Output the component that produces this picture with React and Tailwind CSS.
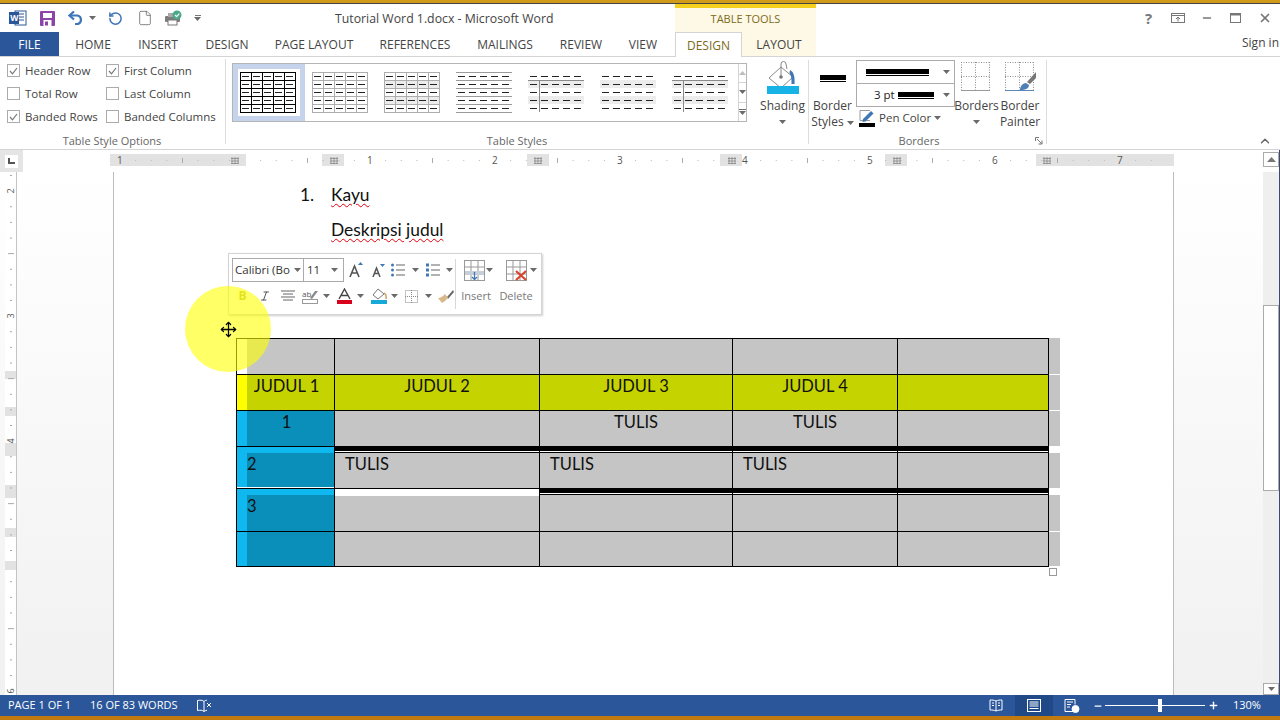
import { File, Minus, Move, Plus, RotateCcw, X, ChevronUp, Italic } from "lucide-react";

const TABS = [
  ["HOME", "w-[68px]"],
  ["INSERT", "w-[62px]"],
  ["DESIGN", "w-[76px]"],
  ["PAGE LAYOUT", "w-[98px]"],
  ["REFERENCES", "w-[104px]"],
  ["MAILINGS", "w-[76px]"],
  ["REVIEW", "w-[76px]"],
  ["VIEW", "w-[48px]"],
];

const Caret = ({ className = "" }) => (
  <svg className={`shrink-0 ${className}`} width="7" height="4" viewBox="0 0 7 4"><path d="M0 0h7L3.5 4z" fill="#6a6a6a" /></svg>
);

const WordLogo = () => (
  <svg width="18" height="16" viewBox="0 0 18 16">
    <rect x="6" y="1" width="11" height="14" fill="#fff" stroke="#2b579a" />
    <path d="M10 4h5M10 7h5M10 10h5" stroke="#2b579a" />
    <rect x="0" y="2" width="10" height="12" fill="#2b579a" />
    <text x="1.2" y="11" fontSize="8.5" fontWeight="700" fill="#fff" fontFamily="Open Sans">W</text>
  </svg>
);

const SaveIcon = () => (
  <svg width="15" height="15" viewBox="0 0 15 15">
    <rect x="0" y="0" width="15" height="15" rx="1" fill="#8c44a8" />
    <rect x="3" y="2" width="9" height="5" fill="#fff" />
    <rect x="3.5" y="9" width="8" height="6" fill="#fff" />
    <rect x="5" y="10.5" width="3" height="4" fill="#8c44a8" />
  </svg>
);

const UndoIcon = () => (
  <svg width="16" height="14" viewBox="0 0 16 14" fill="none" stroke="#3f76b8" strokeWidth="2.2">
    <path d="M1.5 4.5h8a4.4 4.4 0 0 1 0 8.6H7" />
    <path d="M6 0.5 1.5 4.5 6 8.5" />
  </svg>
);

const PrintCheck = () => (
  <svg width="18" height="16" viewBox="0 0 18 16">
    <rect x="0" y="6" width="15" height="6" rx="1" fill="#7d7d7d" />
    <rect x="3" y="10" width="9" height="5" fill="#fff" stroke="#777" />
    <rect x="3" y="3" width="6" height="4" fill="#a9a9a9" />
    <circle cx="12" cy="5" r="4.5" fill="#4aa88c" />
    <path d="M10 5l1.6 1.6L14.4 3.6" stroke="#fff" strokeWidth="1.2" fill="none" />
  </svg>
);

const CheckBox = ({ checked, label }) => (
  <div className="flex h-[23px] items-center gap-[5px]">
    <span className="flex h-[13px] w-[13px] items-center justify-center border border-[#ababab] bg-white">
      {checked && (
        <svg width="9" height="8" viewBox="0 0 9 8" fill="none"><path d="M1 4l2.5 2.8L8 1" stroke="#777" strokeWidth="1.2" /></svg>
      )}
    </span>
    <span>{label}</span>
  </div>
);

const StyleThumb = ({ kind }) => {
  const rowsY = [0, 8, 16, 24, 32, 40];
  const colsX = [0, 11, 22, 33, 44, 55];
  const gridColor = kind === 0 ? "#000" : "#adadad";
  const bands = [2, 4, 5, 6].includes(kind);
  return (
    <svg width="56" height="41" viewBox="0 0 56 41" shapeRendering="crispEdges">
      {bands && [8, 24].map((y) => <rect key={y} x="0" y={y} width="56" height="8" fill="#ececec" />)}
      {[0, 1, 2].includes(kind) && rowsY.map((y) => <line key={y} x1="0" x2="56" y1={y + 0.5} y2={y + 0.5} stroke={gridColor} />)}
      {[0, 1, 2].includes(kind) && colsX.map((x) => <line key={x} x1={x + 0.5} x2={x + 0.5} y1="0" y2="41" stroke={gridColor} />)}
      {kind === 3 && rowsY.map((y) => <line key={y} x1="0" x2="56" y1={y + 0.5} y2={y + 0.5} stroke="#9a9a9a" />)}
      {(kind === 4 || kind === 6) && (
        <>
          <line x1="0" x2="56" y1="8.5" y2="8.5" stroke="#8a8a8a" />
          <line x1="11.5" x2="11.5" y1="8" y2="40" stroke="#8a8a8a" />
        </>
      )}
      {rowsY.slice(0, 5).map((y) =>
        colsX.slice(0, 5).map((x) => <rect key={`${x}-${y}`} x={x + 2} y={y + 4} width="7" height="1" fill="#222" />),
      )}
    </svg>
  );
};

const ShadingIcon = () => (
  <svg width="34" height="34" viewBox="0 0 34 34">
    <path d="M15 6 3 17l12 10 12-11z" fill="#fff" stroke="#8a8a8a" />
    <path d="M15 16V3a2.5 2.5 0 0 1 5 0l1 5" fill="none" stroke="#888" />
    <circle cx="15" cy="16" r="1.8" fill="#777" />
    <path d="M24 9c4 2 5 7 4.500 14h-3c0-5 0-8-2-11z" fill="#3f78b5" />
    <rect x="1" y="25" width="32" height="8" fill="#17b3e6" />
  </svg>
);

const BordersIcon = ({ brush }) => (
  <svg width="33" height="31" viewBox="0 0 33 31" fill="none">
    <g stroke="#8d8d8d" strokeDasharray="1 1.5">
      <path d="M1.5 1v28M15.500 1v28M29.500 1v28M1 1.500h29M1 15.500h29" />
    </g>
    <path d="M1 29.500h29" stroke={brush ? "#5b86b8" : "#9a9a9a"} />
    {brush && (
      <>
        <path d="M16 29c0-4 3-7 6-7l3 2c0 3-3 5-9 5z" fill="#4f7fb5" />
        <path d="m23 21 9-10v6l-6 6z" fill="#777" />
      </>
    )}
  </svg>
);

const PenIcon = () => (
  <svg width="17" height="18" viewBox="0 0 17 18" fill="none">
    <path d="M11 1.500H1v10h10" stroke="#999" />
    <path d="m4 10 8-8 2.500 2.500-8 8L3.500 13z" fill="#3f78b5" />
    <rect x="0" y="14" width="16" height="4" fill="#000" />
  </svg>
);

const ThickLine = ({ className }) => (
  <div className={className}>
    <div className="h-[5px] bg-black" />
    <div className="mt-px h-px bg-black" />
  </div>
);

const RulerTicks = () => {
  const ticks = [];
  for (let i = 1; i < 67; i++) {
    if (i % 8 === 0) continue;
    const x = 10 + i * 15.625;
    ticks.push(
      i % 4 === 0 ? (
        <line key={i} x1={x} x2={x} y1="4" y2="9" stroke="#aaa" />
      ) : (
        <line key={i} x1={x} x2={x} y1="6" y2="7" stroke="#bbb" />
      ),
    );
  }
  return (
    <svg className="absolute left-0 top-0" width="1064" height="12" viewBox="0 0 1064 12">
      {ticks}
      {[125, 224, 428, 622, 787, 937].map((x) => (
        <path key={x} d={`M${x - 3} 3v7M${x} 3v7M${x + 3} 3v7M${x - 4} 4.500h8M${x - 4} 7h8M${x - 4} 9.500h8`} stroke="#888" strokeWidth="0.8" fill="none" />
      ))}
    </svg>
  );
};

const HRuler = () => {
  const segs = [
    ["w-[136px]", "bg-[#e2e2e2]"],
    ["w-[76px]", "bg-white"],
    ["w-[22px]", "bg-[#e2e2e2]"],
    ["w-[183px]", "bg-white"],
    ["w-[22px]", "bg-[#e2e2e2]"],
    ["w-[171px]", "bg-white"],
    ["w-[22px]", "bg-[#e2e2e2]"],
    ["w-[143px]", "bg-white"],
    ["w-[22px]", "bg-[#e2e2e2]"],
    ["w-[129px]", "bg-white"],
    ["w-[138px]", "bg-[#e2e2e2]"],
  ];
  const labels = [
    ["1", "left-[7px]"],
    ["1", "left-[257px]"],
    ["2", "left-[382px]"],
    ["3", "left-[507px]"],
    ["4", "left-[632px]"],
    ["5", "left-[757px]"],
    ["6", "left-[882px]"],
    ["7", "left-[1007px]"],
  ];
  return (
    <div className="relative flex h-[12px] w-[1064px]">
      {segs.map(([w, bg], i) => <div key={i} className={`${w} ${bg}`} />)}
      <RulerTicks />
      {labels.map(([t, left], i) => (
        <span key={i} className={`absolute top-[-3px] text-[10px] leading-[18px] text-[#555] ${left}`}>{t}</span>
      ))}
    </div>
  );
};

const VRuler = () => {
  const segs = [
    ["h-[199px]", "bg-white"],
    ["h-[8px]", "bg-[#e2e2e2]"],
    ["h-[28px]", "bg-white"],
    ["h-[9px]", "bg-[#e2e2e2]"],
    ["h-[27px]", "bg-white"],
    ["h-[13px]", "bg-[#e2e2e2]"],
    ["h-[29px]", "bg-white"],
    ["h-[13px]", "bg-[#e2e2e2]"],
    ["h-[30px]", "bg-white"],
    ["h-[9px]", "bg-[#e2e2e2]"],
    ["h-[24px]", "bg-white"],
    ["h-[9px]", "bg-[#e2e2e2]"],
    ["flex-1", "bg-white"],
  ];
  const ticks = [];
  for (let i = 0; i < 34; i++) {
    if ((i - 1) % 8 === 0) continue;
    const y = 3.5 + i * 15.625;
    ticks.push(
      <line key={i} x1={(i - 1) % 4 === 0 ? 3 : 5} x2={(i - 1) % 4 === 0 ? 9 : 7} y1={y} y2={y} stroke="#aaa" />,
    );
  }
  return (
    <div className="relative flex h-full w-[12px] flex-col border-r border-[#c4c4c4]">
      {segs.map(([h, bg], i) => <div key={i} className={`${h} ${bg}`} />)}
      <svg className="absolute left-0 top-0" width="12" height="523" viewBox="0 0 12 523">{ticks}</svg>
      {[
        ["2", "top-[11px]"],
        ["3", "top-[136px]"],
        ["4", "top-[261px]"],
        ["6", "top-[511px]"],
      ].map(([t, top]) => (
        <span key={t} className={`absolute left-0 w-[12px] -rotate-90 text-center text-[9px] leading-[16px] text-[#555] ${top}`}>{t}</span>
      ))}
    </div>
  );
};

const BORDER = "border-r border-b border-black";

const HeadCell = ({ className = "", children }) => (
  <div className={`${BORDER} ${className}`}>{children}</div>
);

const FirstCol = ({ strip, fill, topStripe, whiteEnd, first, align, text }) => (
  <div className={`flex flex-col border-b border-l border-r border-black ${first ? "border-t" : ""}`}>
    {topStripe && <div className="h-[6px] shrink-0 bg-[#0fb9ef]" />}
    <div className="flex min-h-0 flex-1">
      <div className={`w-[10px] shrink-0 ${strip}`} />
      <div className={`flex-1 ${fill} ${align === "center" ? "pr-[8px] text-center" : ""}`}>{text}</div>
    </div>
    {whiteEnd && <div className="h-px shrink-0 bg-white" />}
  </div>
);

const BodyCell = ({ text, center, heavy, pale }) => (
  <div className={`flex flex-col ${BORDER}`}>
    {heavy && (
      <>
        <div className="h-[4px] shrink-0 bg-black" />
        <div className="h-px shrink-0 bg-white" />
        <div className="h-px shrink-0 bg-black" />
      </>
    )}
    {pale && <div className="h-[7px] shrink-0 bg-white" />}
    <div className={`flex-1 bg-[#c5c5c5] ${center ? "text-center" : "pl-[10px]"}`}>{text}</div>
  </div>
);

const Mark = ({ gap }) => (
  <div className="flex flex-col">
    {gap && <div className="h-[6px] shrink-0 bg-white" />}
    <div className="flex-1 bg-[#c4c4c4]" />
    <div className="h-px shrink-0 bg-white" />
  </div>
);

const WordTable = () => (
  <div className="relative w-[824px] font-['Lato',sans-serif] text-[16.500px] leading-[22px] text-[#111]">
    <div className="grid grid-cols-[99px_205px_193px_165px_151px_11px] grid-rows-[37px_36px_36px_42px_43px_35px]">
      <FirstCol first strip="bg-white" fill="bg-[#c5c5c5]" />
      {[0, 1, 2, 3].map((i) => <HeadCell key={i} className="border-t bg-[#c5c5c5]" />)}
      <Mark />

      <FirstCol strip="bg-[#ffff00]" fill="bg-[#c5d400]" align="center" text="JUDUL 1" />
      {["JUDUL 2", "JUDUL 3", "JUDUL 4", ""].map((t) => <HeadCell key={t} className="bg-[#c5d400] text-center">{t}</HeadCell>)}
      <Mark />

      <FirstCol strip="bg-[#0fb9ef]" fill="bg-[#0a8fbb]" align="center" text="1" />
      <BodyCell />
      <BodyCell center text="TULIS" />
      <BodyCell center text="TULIS" />
      <BodyCell />
      <Mark />

      <FirstCol topStripe whiteEnd strip="bg-[#0fb9ef]" fill="bg-[#0a8fbb]" text="2" />
      <BodyCell heavy text="TULIS" />
      <BodyCell heavy text="TULIS" />
      <BodyCell heavy text="TULIS" />
      <BodyCell heavy />
      <Mark gap />

      <FirstCol topStripe strip="bg-[#0fb9ef]" fill="bg-[#0a8fbb]" text="3" />
      <BodyCell pale />
      <BodyCell heavy />
      <BodyCell heavy />
      <BodyCell heavy />
      <Mark gap />

      <FirstCol strip="bg-[#0fb9ef]" fill="bg-[#0a8fbb]" />
      <BodyCell />
      <BodyCell />
      <BodyCell />
      <BodyCell />
      <Mark />
    </div>
    <div className="absolute -bottom-[9px] right-[3px] h-[8px] w-[8px] border border-[#999] bg-white" />
  </div>
);

const MiniToolbar = () => (
  <div className="absolute left-[228px] top-[253px] flex h-[62px] w-[314px] border border-[#d4d4d4] bg-white pl-[3px] pt-[4px] font-['Open_Sans',sans-serif] text-[11.5px] text-[#444] shadow-[1px_1px_2px_rgba(0,0,0,0.2)]">
    <div className="w-[223px]">
      <div className="flex h-[24px] items-center">
        <div className="flex h-full w-[72px] items-center justify-between whitespace-nowrap border border-[#ababab] px-[2px] text-[#333]">
          Calibri (Bo<Caret />
        </div>
        <div className="flex h-full w-[40px] items-center justify-between border border-l-0 border-[#ababab] px-[3px] pr-[5px] text-[#333]">
          11<Caret />
        </div>
        <svg className="ml-[5px]" width="14" height="16" viewBox="0 0 14 16" fill="none"><path d="M1 15 5.500 4 10 15M3 11h5" stroke="#555" strokeWidth="1.6" /><path d="m9 3 2.500-3L14 3z" fill="#3f78b5" /></svg>
        <svg className="ml-[9px]" width="14" height="14" viewBox="0 0 14 14" fill="none"><path d="M1 14 4.500 5 8 14M2.500 10.500h4" stroke="#555" strokeWidth="1.5" /><path d="m8 1 2.500 3L13 1z" fill="#3f78b5" /></svg>
        <svg className="ml-[5px]" width="14" height="14" viewBox="0 0 14 14">
          {[2, 7, 12].map((y) => <g key={y}><circle cx="1.500" cy={y} r="1.500" fill="#3f78b5" /><rect x="5" y={y - 0.5} width="9" height="1" fill="#666" /></g>)}
        </svg>
        <Caret className="ml-[7px]" />
        <svg className="ml-[7px]" width="14" height="15" viewBox="0 0 14 15">
          {[2, 7, 12].map((y) => <g key={y}><rect x="0" y={y - 1.500} width="3" height="3" fill="#3f78b5" /><rect x="5" y={y - 0.5} width="9" height="1" fill="#666" /></g>)}
        </svg>
        <Caret className="ml-[6px]" />
      </div>
      <div className="mt-px flex h-[26px] items-center pl-[4px]">
        <span className="w-[13px] text-center text-[12px] font-bold text-[#b9b94a]">B</span>
        <Italic className="ml-[10px]" size={12} strokeWidth={2} color="#555" />
        <svg className="ml-[10px]" width="14" height="12" viewBox="0 0 14 12" stroke="#666"><path d="M0 1h14M2 4h10M0 7h14M2 10h10" /></svg>
        <span className="relative ml-[7px] flex h-[15px] w-[17px] items-start">
          <span className="text-[8px] leading-[9px] text-[#555]">ab</span>
          <svg className="absolute left-0 top-0" width="17" height="15" viewBox="0 0 17 15" fill="none">
            <path d="M8 9 13 2h3L10 10z" fill="#8a8a8a" />
            <rect x="0.500" y="10.500" width="15" height="4" stroke="#999" fill="#fff" />
          </svg>
        </span>
        <Caret className="ml-[4px]" />
        <svg className="ml-[7px]" width="15" height="16" viewBox="0 0 15 16" fill="none"><path d="M2 11 7.500 1 13 11M4 7.500h7" stroke="#444" strokeWidth="1.4" /><rect x="0" y="12" width="15" height="4" fill="#d9001b" /></svg>
        <Caret className="ml-[5px]" />
        <svg className="ml-[7px]" width="16" height="16" viewBox="0 0 16 16" fill="none"><path d="M7 1 2 7l5 4 6-5z" stroke="#777" fill="#fff" /><path d="M13 5c2 1 2.500 3 2 6" stroke="#caa46a" strokeWidth="1.5" /><rect x="0" y="12" width="16" height="4" fill="#17a9d8" /></svg>
        <Caret className="ml-[4px]" />
        <svg className="ml-[7px]" width="13" height="13" viewBox="0 0 13 13" fill="none" stroke="#888" strokeDasharray="1 1"><path d="M.5.500h12v12H.5zM6.500 0v13M0 6.500h13" /></svg>
        <Caret className="ml-[7px]" />
        <svg className="ml-[6px]" width="16" height="14" viewBox="0 0 16 14"><path d="M9 8 15 1l1 2-6 7z" fill="#6b6b6b" /><path d="M0 9c3 0 5-2 7-4l3 4c-2 2-4 4-6 5z" fill="#d8b98a" /></svg>
      </div>
    </div>
    <div className="my-[1px] h-[50px] border-l border-[#d8d8d8]" />
    <div className="flex w-[44px] flex-col items-center">
      <div className="flex h-[24px] items-center">
        <svg width="21" height="21" viewBox="0 0 21 21" fill="none" stroke="#999"><rect x=".5" y=".5" width="20" height="20" /><path d="M7 0v21M14 0v21M0 7h21M0 14h21" /><rect x="1" y="11" width="19" height="4" fill="#c6cfd9" stroke="none" /><path d="M10.500 12v7M8 17l2.500 2.500L13 17" stroke="#3f78b5" strokeWidth="1.300" /></svg>
        <Caret className="ml-[1px]" />
      </div>
      <div className="-ml-[4px] mt-[2px] text-[11px] leading-[24px] text-[#777]">Insert</div>
    </div>
    <div className="flex w-[38px] flex-col items-center pl-[4px]">
      <div className="flex h-[24px] items-center">
        <svg width="23" height="21" viewBox="0 0 23 21" fill="none" stroke="#999"><rect x=".5" y=".5" width="20" height="20" /><path d="M7 0v21M14 0v21M0 7h21M0 14h21" /><path d="m10 11 10 9M20 11l-10 9" stroke="#d8452f" strokeWidth="2.200" /></svg>
        <Caret className="ml-[1px]" />
      </div>
      <div className="-ml-[10px] mt-[2px] text-[11px] leading-[24px] text-[#777]">Delete</div>
    </div>
  </div>
);

const App = () => (
  <div className="relative flex h-[720px] w-[1280px] flex-col overflow-hidden bg-white font-['Open_Sans',sans-serif] text-[11.5px] text-[#444]">
    <div className="h-[3px] shrink-0 bg-[#d29a1a]" />
    <div className="h-px shrink-0 bg-[#444]" />

    {/* title bar */}
    <div className="flex h-[28px] shrink-0">
      <div className="flex w-[335px] items-center pl-[9px]">
        <WordLogo />
        <span className="ml-[13px]"><SaveIcon /></span>
        <span className="ml-[13px]"><UndoIcon /></span>
        <Caret className="ml-[5px]" />
        <RotateCcw className="ml-[12px]" size={15} strokeWidth={2.4} color="#3f76b8" />
        <File className="ml-[14px]" size={16} strokeWidth={1.2} color="#666" />
        <span className="ml-[12px]"><PrintCheck /></span>
        <span className="ml-[11px] flex flex-col items-center gap-px"><span className="h-px w-[6px] bg-[#777]" /><Caret /></span>
      </div>
      <div className="w-[340px] pt-[6px] text-[12.300px] leading-[17px]">Tutorial Word 1.docx - Microsoft Word</div>
      <div className="w-[141px] border-t-[4px] border-[#f4cf1c] bg-[#fdf9e6] pt-[2px] text-center text-[11px] leading-[18px] text-[#7d6a1a]">TABLE TOOLS</div>
      <div className="flex flex-1 items-center justify-end pr-px text-[#777]">
        <span className="flex w-[29px] justify-center text-[15px] font-bold leading-none">?</span>
        <span className="flex w-[29px] justify-center"><svg width="14" height="10" viewBox="0 0 14 10" fill="none" stroke="#777"><rect x=".5" y=".5" width="13" height="9" /><path d="M.5 2.500h13M7 8.500V4M5 6l2-2 2 2" /></svg></span>
        <span className="flex w-[29px] justify-center"><Minus size={12} strokeWidth={3} /></span>
        <span className="flex w-[29px] justify-center"><svg width="11" height="10" viewBox="0 0 11 10" fill="none" stroke="#777"><rect x=".5" y=".5" width="10" height="9" /><path d="M0 1.500h11" strokeWidth="2" /></svg></span>
        <span className="flex w-[29px] justify-center"><X size={14} strokeWidth={3} /></span>
      </div>
    </div>

    {/* tabs */}
    <div className="flex h-[25px] shrink-0 border-b border-[#d4d4d4] text-[12px] leading-[25px]">
      <div className="w-[59px] bg-[#2b579a] text-center text-white">FILE</div>
      {TABS.map(([t, w]) => <div key={t} className={`${w} text-center`}>{t}</div>)}
      <div className="w-[8px]" />
      <div className="-mb-px w-[67px] border-x border-t border-[#d4d4d4] bg-white text-center text-[#7d6a1a]">DESIGN</div>
      <div className="w-[74px] bg-[#fdf9e6] text-center">LAYOUT</div>
      <div className="flex flex-1 justify-end pr-[1px] leading-[21px]">Sign in</div>
    </div>

    {/* ribbon */}
    <div className="flex h-[93px] shrink-0 border-b border-[#d4d4d4]">
      <div className="flex w-[227px] flex-col items-stretch pt-[2px]">
        <div className="mr-[1px] h-[85px] border-r border-[#dcdcdc]">
          <div className="grid grid-cols-[99px_1fr] pl-[7px]">
            <CheckBox checked label="Header Row" />
            <CheckBox checked label="First Column" />
            <CheckBox label="Total Row" />
            <CheckBox label="Last Column" />
            <CheckBox checked label="Banded Rows" />
            <CheckBox label="Banded Columns" />
          </div>
          <div className="mt-[3px] pr-[1px] text-center text-[11px] leading-[20px] text-[#666]">Table Style Options</div>
        </div>
      </div>

      <div className="flex w-[582px] flex-col pt-[3px]">
        <div className="h-[84px] border-r border-[#dcdcdc]">
          <div className="flex h-[60px] pl-[5px] pt-[3px]">
            <div className="flex h-[59px] w-[520px] border border-[#b5b5b5]">
              {[0, 1, 2, 3, 4, 5, 6].map((k) => (
                <div key={k} className={`flex h-[57px] w-[72px] items-center justify-center pr-[2px] ${k === 0 ? "border-[5px] border-[#c6d3ec]" : ""}`}>
                  <StyleThumb kind={k} />
                </div>
              ))}
              <div className="ml-[1px] flex flex-1 flex-col border-l border-[#d4d4d4]">
                <div className="flex flex-1 items-center justify-center"><svg width="7" height="4" viewBox="0 0 7 4"><path d="M0 4h7L3.500 0z" fill="#bdbdbd" /></svg></div>
                <div className="flex flex-1 items-center justify-center border-y border-[#d4d4d4]"><Caret /></div>
                <div className="flex flex-1 flex-col items-center justify-center gap-px"><span className="h-px w-[7px] bg-[#6a6a6a]" /><Caret /></div>
              </div>
            </div>
            <div className="ml-[10px] flex w-[54px] flex-col items-center">
              <div className="-mt-[2px]"><ShadingIcon /></div>
              <div className="mt-[3px] text-[12px] leading-[16px]">Shading</div>
              <Caret className="mt-[6px]" />
            </div>
          </div>
          <div className="mt-[11px] pr-px text-center text-[11px] leading-[20px] text-[#666]">Table Styles</div>
        </div>
      </div>

      <div className="flex w-[238px] flex-col pt-[3px]">
        <div className="h-[84px] border-r border-[#dcdcdc]">
          <div className="flex h-[75px]">
            <div className="flex w-[47px] flex-col items-center">
              <ThickLine className="mt-[15px] w-[26px]" />
              <div className="mt-[16px] text-center text-[12px] leading-[16px]">Border<br />Styles <Caret className="inline-block align-middle" /></div>
            </div>
            <div className="w-[99px]">
              <div className="flex h-[24px] items-center border border-[#ababab] pl-[9px] pr-[4px]">
                <ThickLine className="w-[66px]" />
                <Caret className="ml-[14px]" />
              </div>
              <div className="-mt-px flex h-[24px] items-center border border-[#ababab] pl-[17px] pr-[4px] text-[#222]">
                <span className="w-[25px]">3 pt</span>
                <ThickLine className="w-[37px]" />
                <Caret className="ml-[9px]" />
              </div>
              <div className="flex h-[22px] items-center pl-[3px]">
                <PenIcon />
                <span className="ml-[3px]">Pen Color</span>
                <Caret className="ml-[3px]" />
              </div>
            </div>
            <div className="flex w-[43px] flex-col items-center pt-[1px]">
              <BordersIcon />
              <div className="mt-[6px] text-[12px] leading-[16px]">Borders</div>
              <Caret className="mt-[6px]" />
            </div>
            <div className="flex w-[44px] flex-col items-center pt-[1px]">
              <BordersIcon brush />
              <div className="mt-[6px] text-center text-[12px] leading-[16px]">Border<br />Painter</div>
            </div>
          </div>
          <div className="flex h-[12px] items-center">
            <span className="w-[226px] pr-[6px] text-center text-[11px] leading-[12px] text-[#666]">Borders</span>
            <svg width="8" height="8" viewBox="0 0 8 8" fill="none" stroke="#777"><path d="M.5 4V.5H4M2 2l5 5M7 3.500V7H3.500" /></svg>
          </div>
        </div>
      </div>
      <div className="flex flex-1 items-end justify-end pb-[1px] pr-[8px]">
        <ChevronUp size={14} strokeWidth={2.4} color="#666" />
      </div>
    </div>

    {/* ruler row */}
    <div className="flex h-[22px] shrink-0">
      <div className="flex w-[23px] items-center justify-center bg-[#e5e5e5]">
        <span className="flex h-[13px] w-[13px] items-center justify-center bg-white">
          <span className="h-[6px] w-[7px] border-b-2 border-l-2 border-[#555]" />
        </span>
      </div>
      <div className="w-[87px]" />
      <div className="pt-[4px]"><HRuler /></div>
      <div className="flex-1" />
      <div className="w-[16px] pt-[2px]">
        <div className="flex h-[15px] items-center justify-center border border-[#ababab] bg-white"><svg width="9" height="5" viewBox="0 0 9 5"><path d="M0 5h9L4.500 0z" fill="#777" /></svg></div>
      </div>
      <div className="w-px bg-[#3a4d70]" />
    </div>

    {/* document */}
    <div className="flex min-h-0 flex-1 bg-linear-to-b from-white to-[#f1f1f1]">
      <div className="w-[113px] shrink-0 pl-[5px]"><VRuler /></div>
      <div className="w-[1061px] shrink-0 border-x border-[#bcbcbc] bg-white pt-[11px] font-['Lato',sans-serif] text-[17.400px] leading-[23px] text-[#111]">
        <div className="flex pl-[186px]">
          <span className="w-[31px]">1.</span>
          <span className="underline decoration-red-600 decoration-wavy decoration-1 underline-offset-2">Kayu</span>
        </div>
        <div className="mt-[12px] pl-[217px]">
          <span className="underline decoration-red-600 decoration-wavy decoration-1 underline-offset-2">Deskripsi judul</span>
        </div>
        <div className="ml-[122px] mt-[97px]"><WordTable /></div>
      </div>
      <div className="flex-1" />
      <div className="flex w-[16px] flex-col bg-[#efefef]">
        <div className="h-[133px]" />
        <div className="h-[186px] border border-[#ababab] bg-white" />
        <div className="flex-1" />
        <div className="flex h-[12px] items-center justify-center border border-[#ababab] bg-white"><Caret /></div>
      </div>
      <div className="w-px bg-[#3a4d70]" />
    </div>

    {/* status bar */}
    <div className="flex h-[21px] shrink-0 items-center bg-[#2b579a] text-[11px] text-white">
      <span className="ml-[8px] w-[82px]">PAGE 1 OF 1</span>
      <span className="w-[107px]">16 OF 83 WORDS</span>
      <svg width="15" height="14" viewBox="0 0 15 14" fill="none" stroke="#fff"><path d="M7 2.500C5.500 1 3 1 .5 1.500v10c2.500-.5 5-.5 6.500 1v-10zM7 2.500c1-1 2-1.300 3-1.300M7 12.500c.8-.7 1.700-1 3-1.200" /><path d="m10 4 4 4M14 4l-4 4" /></svg>
      <div className="flex-1" />
      <svg width="14" height="13" viewBox="0 0 14 13" fill="none" stroke="#fff"><path d="M7 2C5 1 3 1 1 1v10c2 0 4 0 6 1 2-1 4-1 6-1V1c-2 0-4 0-6 1zM7 2v10M3 4h2M3 6.500h2M9 4h2M9 6.500h2" /></svg>
      <div className="ml-[12px] flex h-[21px] w-[38px] items-center justify-center bg-[#1f4a87]">
        <svg width="14" height="13" viewBox="0 0 14 13" fill="none" stroke="#fff"><rect x=".5" y=".5" width="13" height="12" /><path d="M2.500 3h9M2.500 5h9M2.500 7h9M2.500 9.500h9" /></svg>
      </div>
      <svg className="ml-[11px]" width="16" height="14" viewBox="0 0 16 14" fill="none" stroke="#fff"><path d="M9 12.500H1V.5h10v5M3 3h6M3 5.500h4M3 8h3" /><circle cx="11.500" cy="10" r="3.500" fill="#fff" /></svg>
      <Minus className="ml-[13px]" size={10} strokeWidth={3} />
      <div className="relative ml-[2px] h-px w-[100px] bg-white">
        <span className="absolute left-[53px] top-[-6px] h-[13px] w-[4px] bg-white" />
      </div>
      <Plus className="ml-[3px]" size={11} strokeWidth={3} />
      <span className="ml-[14px] w-[47px]">130%</span>
    </div>
    <div className="h-[4px] shrink-0 bg-[#c07a10]" />

    <MiniToolbar />
    <div className="pointer-events-none absolute left-[185px] top-[286px] h-[86px] w-[86px] rounded-full bg-[#ffff00]/60" />
    <Move className="absolute left-[220px] top-[321px]" size={17} strokeWidth={1.8} color="#000" />
  </div>
);

export default App;
